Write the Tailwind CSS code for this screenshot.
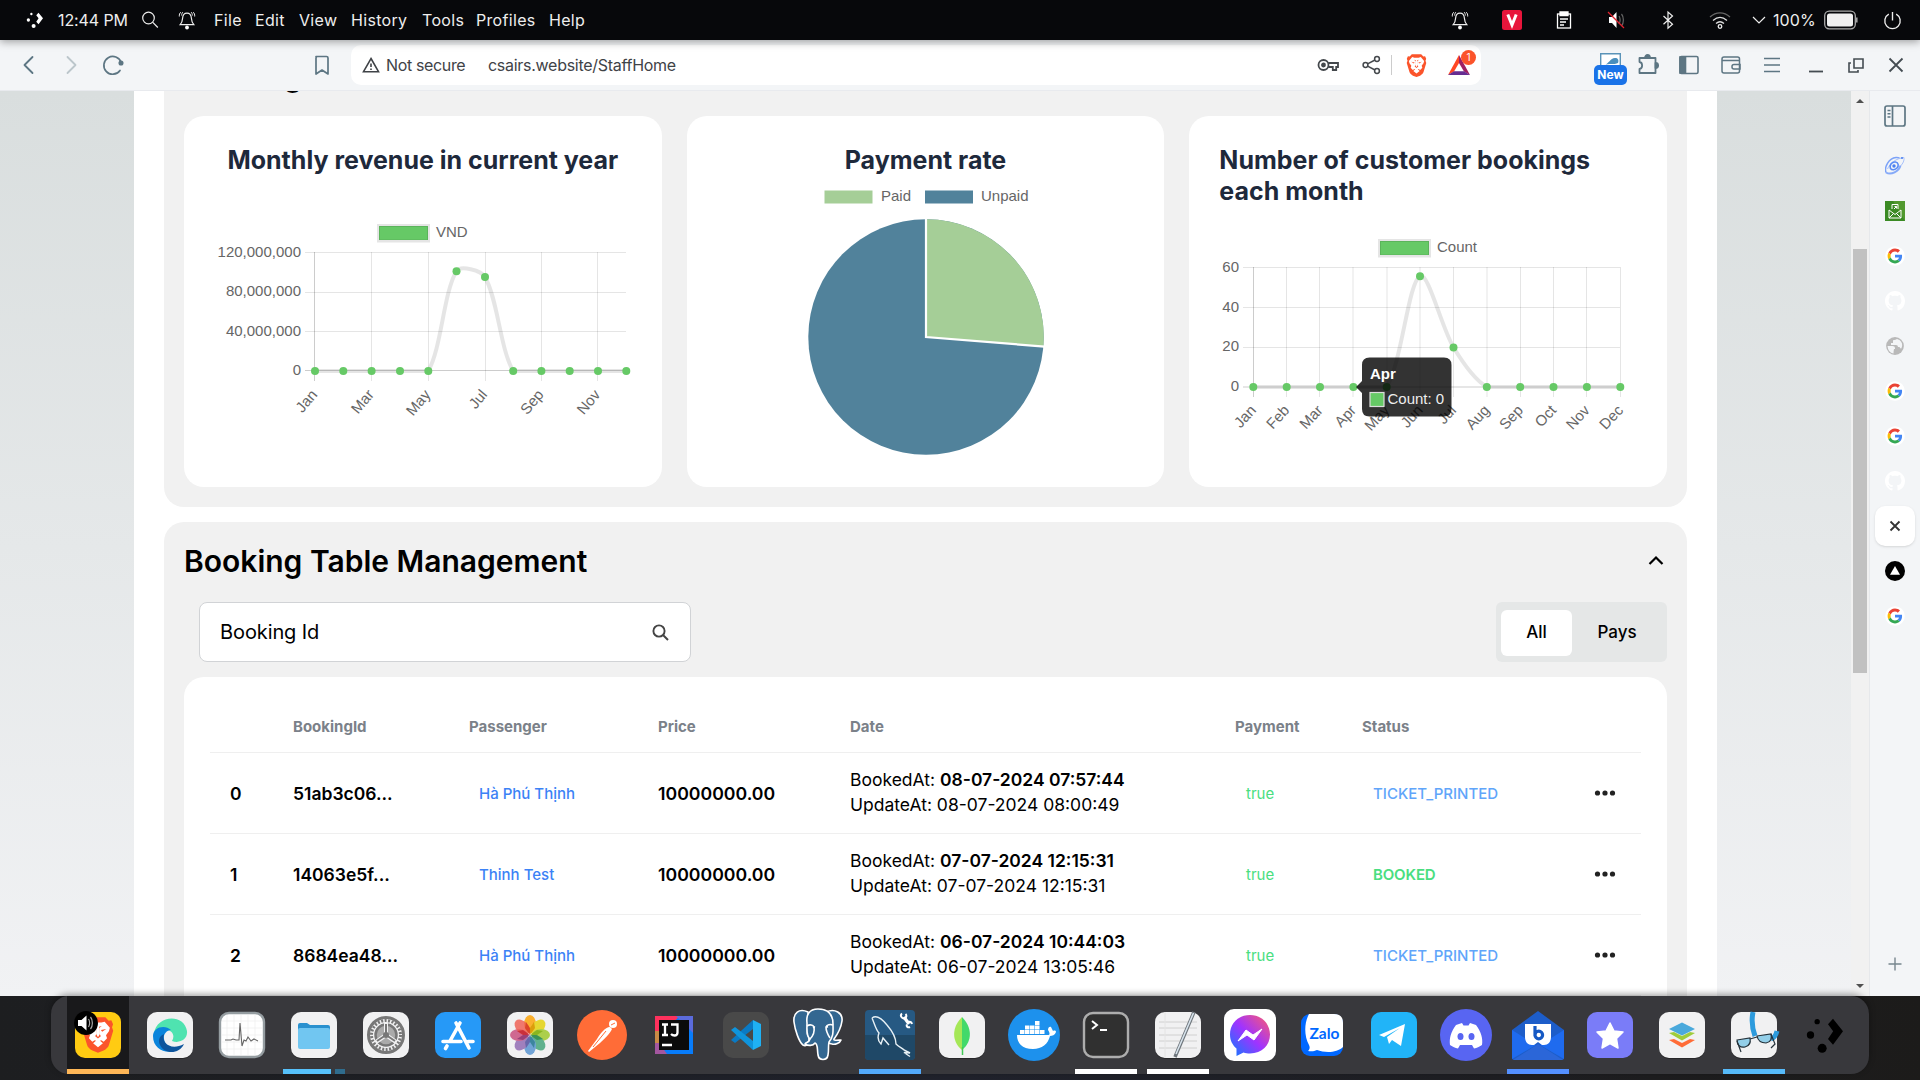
<!DOCTYPE html>
<html lang="en">
<head>
<meta charset="utf-8">
<title>Staff Home</title>
<script src="https://cdn.jsdelivr.net/npm/@tailwindcss/browser@4"></script>
</head>
<body class="w-[1920px] h-[1080px] overflow-hidden flex flex-col bg-[#1f1f23] font-['Inter',sans-serif]">

<svg width="0" height="0" class="absolute">
  <defs>
    <symbol id="bell" viewBox="0 0 20 20"><path d="M10 3.2c-3 0-4.2 2-4.4 5-.2 3-.8 4.6-2.4 6.4h13.600c-1.600-1.800-2.200-3.400-2.400-6.400-.2-3-1.400-5-4.400-5z" fill="none" stroke="#eee" stroke-width="1.200"/><path d="M3.800 2.200C2.600 3.300 2.200 4.500 2.300 6.500M6 2C5 3 4.700 4 4.600 5.500M16.200 2.200c1.200 1.100 1.600 2.300 1.500 4.300M14 2c1 1 1.300 2 1.400 3.500" fill="none" stroke="#eee" stroke-width="1"/><circle cx="10" cy="17.500" r="1.900" fill="#fff"/></symbol>
    <symbol id="google" viewBox="0 0 20 20"><circle cx="10" cy="10" r="9.800" fill="#fff"/><g transform="translate(2.600 2.600) scale(.308)"><path fill="#EA4335" d="M24 9.500c3.540 0 6.710 1.220 9.210 3.600l6.850-6.850C35.900 2.380 30.470 0 24 0 14.620 0 6.510 5.380 2.560 13.220l7.980 6.190C12.430 13.720 17.740 9.500 24 9.500z"/><path fill="#4285F4" d="M46.980 24.550c0-1.570-.150-3.090-.380-4.550H24v9.020h12.940c-.580 2.960-2.260 5.480-4.780 7.180l7.730 6c4.510-4.180 7.090-10.360 7.090-17.650z"/><path fill="#FBBC05" d="M10.530 28.590c-.480-1.450-.760-2.990-.760-4.590s.270-3.140.760-4.590l-7.980-6.190C.920 16.460 0 20.120 0 24c0 3.880.920 7.540 2.560 10.780l7.970-6.190z"/><path fill="#34A853" d="M24 48c6.480 0 11.930-2.130 15.890-5.810l-7.730-6c-2.150 1.450-4.920 2.300-8.160 2.300-6.260 0-11.570-4.220-13.470-9.910l-7.980 6.190C6.510 42.620 14.620 48 24 48z"/></g></symbol>
    <symbol id="github" viewBox="0 0 16 16"><path fill="#fff" d="M8 0C3.580 0 0 3.580 0 8c0 3.540 2.290 6.530 5.470 7.590.400.070.550-.170.550-.380 0-.190-.010-.820-.010-1.490-2.010.370-2.530-.490-2.690-.940-.090-.230-.480-.940-.820-1.130-.280-.150-.680-.520-.010-.530.630-.010 1.080.580 1.230.820.720 1.210 1.870.870 2.330.660.070-.520.280-.870.510-1.070-1.780-.200-3.640-.890-3.640-3.950 0-.870.310-1.590.820-2.150-.080-.200-.360-1.020.080-2.120 0 0 .670-.210 2.200.820.640-.180 1.320-.270 2-.270s1.360.090 2 .270c1.530-1.040 2.200-.820 2.200-.820.440 1.100.160 1.920.080 2.120.510.560.820 1.270.820 2.150 0 3.070-1.870 3.750-3.650 3.950.290.250.540.730.540 1.480 0 1.070-.010 1.930-.010 2.200 0 .210.150.460.550.380A8.010 8.010 0 0 0 16 8c0-4.420-3.580-8-8-8z"/></symbol>
    <symbol id="brave" viewBox="0 0 24 28"><path fill="#fb542b" d="M6.500 1.500h11L20 4l2-.3 1.300 3-.8 2.300.9 2.600-3.200 10.600c-.5 1.800-2 3-4 4.200L12 28l-4.200-1.600c-2-1.200-3.500-2.400-4-4.200L.6 11.600l.9-2.600-.8-2.300L2 3.700 4 4z"/><path fill="#fff" d="M7 4.800l2.500.6h5l2.500-.6 3.900 4.600-.7 2.600-2.200 3 .8 2.200-2.500 2.600-1.900-1.200-.9.500 2.200 1.800-3.700 3-3.700-3 2.200-1.800-.9-.5-1.900 1.200-2.500-2.600.8-2.200-2.200-3-.7-2.600z"/><path fill="#fb542b" d="M5.800 10.200l4 .8-.9 1.300zM18.200 10.200l-4 .8.900 1.300zM9.200 8l2 .5v.7l-.6 4.800 1.400 2.500 1.400-2.500-.6-4.800v-.7l2-.5-1.800 1.500.5 4.800.6 1.400-2.100 1.700-2.100-1.700.6-1.400.5-4.800z"/></symbol>
    <symbol id="tile" viewBox="0 0 56 56"><rect x="5" y="6" width="46" height="46" rx="10" fill="#000" opacity=".3"/><rect x="5" y="5" width="46" height="46" rx="10" fill="#f1f1f2"/></symbol>
    <symbol id="dots" viewBox="0 0 24 24"><g fill="currentColor"><circle cx="8.500" cy="4" r="1.600"/><circle cx="4.500" cy="12" r="2.200"/><circle cx="11.500" cy="20" r="2.700"/><path d="M15 5.500l3-3.300 6 7.600-6 8-3-3.400 3.100-4.600z"/></g></symbol>
    <symbol id="more" viewBox="0 0 24 8"><g fill="#222"><circle cx="4.500" cy="4" r="2.600"/><circle cx="12" cy="4" r="2.600"/><circle cx="19.500" cy="4" r="2.600"/></g></symbol>
  </defs>
</svg>

<!-- System menu bar -->
<header class="h-10 shrink-0 bg-[#07080b] flex items-center text-base text-[#eee] relative z-10 shadow-[0_2px_8px_rgba(0,0,0,.35)] tracking-[.32px]">
  <svg class="w-[18px] h-[18px] ml-[25px] text-white shrink-0"><use href="#dots"/></svg>
  <div class="ml-[15px] w-[83px] whitespace-nowrap tracking-[-.1px]">12:44 PM</div>
  <svg class="w-[18px] h-[18px] shrink-0" viewBox="0 0 18 18" fill="none" stroke="#eee" stroke-width="1.200"><circle cx="7.500" cy="7" r="5.800"/><path d="M11.800 11.300l5 5.200"/></svg>
  <svg class="w-5 h-5 ml-[18px] shrink-0"><use href="#bell"/></svg>
  <nav class="flex ml-[17px] whitespace-nowrap">
    <div class="w-[41px]">File</div><div class="w-[44px]">Edit</div><div class="w-[52px]">View</div><div class="w-[71px]">History</div><div class="w-[54px]">Tools</div><div class="w-[73px]">Profiles</div><div>Help</div>
  </nav>
  <div class="ml-auto mr-[18px] flex items-center">
    <svg class="w-5 h-5 mr-[32px]"><use href="#bell"/></svg>
    <svg class="w-5 h-5 mr-[32px]" viewBox="0 0 20 20"><rect width="20" height="20" rx="2.500" fill="#e8153b"/><path d="M5.800 4.500L10 15l4.200-10.500" fill="none" stroke="#fff" stroke-width="3"/></svg>
    <svg class="w-5 h-5 mr-[32px]" viewBox="0 0 20 20" fill="none" stroke="#fff" stroke-width="1.300"><rect x="3.500" y="4" width="13" height="14"/><path d="M6 2h8v3.500H6z" fill="#fff"/><path d="M6 9h8M6 12h6M6 15h4"/></svg>
    <svg class="w-5 h-5 mr-[32px]" viewBox="0 0 20 20"><path d="M3 7h3l4.500-5v16L6 13H3z" fill="#fff"/><path d="M13 6c1.500 2 1.500 6 0 8M15.500 4c2.500 3 2.500 9 0 12" fill="none" stroke="#666" stroke-width="1.200"/><path d="M2 2l16 16" stroke="#e0202c" stroke-width="1.300"/></svg>
    <svg class="w-5 h-5 mr-[31px]" viewBox="0 0 20 20" fill="none" stroke="#eee" stroke-width="1.200"><path d="M5.500 6l9 8.200-4.500 4V2l4.500 4-9 8.200"/></svg>
    <svg class="w-[22px] h-5 mr-[21px]" viewBox="0 0 22 20" fill="none" stroke-width="1.300"><path d="M1 7c6-5.500 14-5.500 20 0" stroke="#666"/><path d="M4 10.500c4.500-4 9.500-4 14 0M7 13.500c2.500-2.200 5.500-2.200 8 0" stroke="#ddd"/><circle cx="11" cy="16.500" r="1.800" stroke="#eee"/></svg>
    <svg class="w-[14px] h-3 mr-[7px]" viewBox="0 0 14 12" fill="none" stroke="#eee" stroke-width="1.200"><path d="M1 3l6 6 6-6"/></svg>
    <div class="w-[51px] tracking-[.1px]">100%</div>
    <svg class="w-[34px] h-5 mr-[25px]" viewBox="0 0 34 20"><rect x=".7" y="1.200" width="30.600" height="17.600" rx="4.500" fill="none" stroke="#aaa" stroke-width="1.300"/><rect x="3" y="3.500" width="26" height="13" rx="2.500" fill="#f1f1f1"/><path d="M32.800 7.500v5" stroke="#aaa" stroke-width="1.500"/></svg>
    <svg class="w-[19px] h-[19px]" viewBox="0 0 18 18" fill="none" stroke="#eee" stroke-width="1.300"><path d="M5.500 3a7.300 7.300 0 1 0 7 0M9 1v8"/></svg>
  </div>
</header>

<!-- Browser toolbar -->
<div class="h-[51px] shrink-0 bg-[#f3f5f7] border-b border-[#e8eaee] flex items-center text-[#5d7683]">
  <svg class="w-6 h-6 ml-[17px]" viewBox="0 0 24 24" fill="none" stroke="#5d7683" stroke-width="1.800" stroke-linecap="round" stroke-linejoin="round"><path d="M15.500 4l-8 8 8 8"/></svg>
  <svg class="w-6 h-6 ml-[18px]" viewBox="0 0 24 24" fill="none" stroke="#bcc6cb" stroke-width="1.800" stroke-linecap="round" stroke-linejoin="round"><path d="M8.500 4l8 8-8 8"/></svg>
  <svg class="w-6 h-6 ml-[18px]" viewBox="0 0 24 24" fill="none" stroke="#5d7683" stroke-width="1.700" stroke-linecap="round"><path d="M19 17.500a8.900 8.900 0 1 1 1.200-8"/><circle cx="20" cy="10" r="1.700" fill="#5d7683"/></svg>
  <svg class="w-6 h-6 ml-[185px]" viewBox="0 0 24 24" fill="none" stroke="#5d7683" stroke-width="1.700" stroke-linejoin="round"><path d="M6 3.500h10.500q1.500 0 1.500 1.500v16l-6-4-6 4V5q0-1.500 1.500-1.500z"/></svg>
  <div class="ml-[17px] w-[1130px] h-10 rounded-[10px] bg-white flex items-center text-base text-[#3f4347]">
    <svg class="w-[18px] h-[18px] ml-[11px]" viewBox="0 0 18 18" fill="none" stroke="#3f4347" stroke-width="1.600"><path d="M9 2.500l7.500 13.200H1.500zM9 7.500v3.600M9 12.500v1.500"/></svg>
    <span class="ml-[6px] w-[102px] whitespace-nowrap tracking-[-.35px]">Not secure</span>
    <span class="whitespace-nowrap tracking-[-.28px]">csairs.website/StaffHome</span>
    <svg class="w-[22px] h-5 ml-auto" viewBox="0 0 22 20" fill="none" stroke="#44484c" stroke-width="1.800"><circle cx="6.500" cy="10" r="5"/><circle cx="6.500" cy="10" r="1.500" fill="#44484c"/><path d="M11.200 8H21v4h-1.800v3h-3.400v-3h-4.600"/></svg>
    <svg class="w-5 h-5 ml-[22px]" viewBox="0 0 20 20" fill="none" stroke="#44484c" stroke-width="1.500"><circle cx="4.500" cy="10" r="2.400"/><circle cx="16" cy="4" r="2.400"/><circle cx="16" cy="16" r="2.400"/><path d="M6.600 8.900L14 5M6.600 11.100L14 15"/></svg>
    <div class="w-px h-5 bg-[#ccc] ml-[10px]"></div>
    <svg class="w-[21px] h-6 ml-[14px]"><use href="#brave"/></svg>
    <div class="relative w-[24px] h-6 ml-[20px] mr-[10px]">
      <svg class="w-6 h-6" viewBox="0 0 24 24"><path d="M12 2L1 22l6-3.500L12 10z" fill="#ff4724"/><path d="M12 2l11 20-6-3.500L12 10z" fill="#9e1f63"/><path d="M1 22h22l-6-3.800H7z" fill="#662d91"/></svg>
      <div class="absolute left-[14px] -top-[3px] size-[15px] rounded-full bg-[#fb542b] text-white text-[10px] leading-[15px] text-center">1</div>
    </div>
  </div>
  <div class="relative w-[33px] h-[38px] ml-[113px] shrink-0">
    <svg class="absolute left-[6px] top-[7px] w-[21px] h-[14px]" viewBox="0 0 21 14"><path d="M.7 14V.7h19.600V14" fill="#fff" stroke="#5a93b8" stroke-width="1.400"/><path d="M4 12c5-1 6-7 11-7 3 0 4 2 3 5-4 2-9 0-14 2z" fill="#4a8fbd"/></svg>
    <div class="absolute left-0 top-[19px] w-[33px] h-[20px] rounded-[5px] bg-[#1a73e8] text-white text-[12px] leading-[19px] font-bold text-center">New</div>
  </div>
  <svg class="w-6 h-6 ml-[10px]" viewBox="0 0 24 24" fill="none" stroke="#5d7683" stroke-width="1.800" stroke-linejoin="round"><path d="M2.500 5h16v15h-16v-4c3.500-.5 3.500-6.500 0-7z"/><path d="M8 5c0-4 5-4 5 0zM18.500 10c3.500 0 3.500 5 0 5z" fill="#5d7683"/></svg>
  <svg class="w-6 h-6 ml-[16px]" viewBox="0 0 24 24" fill="none" stroke="#5d7683" stroke-width="1.600"><rect x="3" y="3.500" width="18" height="17" rx="1.500"/><path d="M3 4h5.500v16H3z" fill="#5d7683"/></svg>
  <svg class="w-6 h-6 ml-[18px]" viewBox="0 0 24 24" fill="none" stroke="#5d7683" stroke-width="1.500"><rect x="3" y="4" width="17.500" height="16" rx="2"/><path d="M3 7.500h17.500M21 11.500h-6q-2 0-2 2v.5q0 2 2 2h6z"/></svg>
  <svg class="w-6 h-6 ml-[17px]" viewBox="0 0 24 24" stroke="#5d7683" stroke-width="1.500"><path d="M4 5.500h16M4 12h16M4 18.500h16"/></svg>
  <svg class="w-6 h-6 ml-[20px]" viewBox="0 0 24 24" stroke="#444c52" stroke-width="1.800"><path d="M5 18.500h14"/></svg>
  <svg class="w-6 h-6 ml-[16px]" viewBox="0 0 24 24" fill="none" stroke="#444c52" stroke-width="1.600"><path d="M10 6h9v9h-9z"/><path d="M7 10H5v9h9v-2"/></svg>
  <svg class="w-6 h-6 ml-[16px]" viewBox="0 0 24 24" stroke="#444c52" stroke-width="1.800"><path d="M5.500 5.500l13 13M18.500 5.500l-13 13"/></svg>
</div>

<div class="h-[905px] shrink-0 flex overflow-hidden">
  <!-- Page -->
  <main class="w-[1851px] h-full px-[134px] bg-linear-to-b from-[#d9dede] to-[#f1f2f4] overflow-hidden">
    <div class="w-[1583px] h-full bg-white px-[30px] overflow-hidden">
      <section class="-mt-[56px] h-[472px] rounded-[20px] bg-[#f1f1f1] px-5">
        <h2 class="h-[81px] flex items-center text-[30px] font-semibold">Booking</h2>
        <div class="grid grid-cols-3 gap-[25px]">
          <div class="h-[371px] rounded-[20px] bg-white pt-[29px] overflow-hidden">
            <h3 class="text-center text-[25px] leading-[31px] font-bold text-[#1e293b]">Monthly revenue in current year</h3>
            <svg class="w-[478px] h-[311px] font-['Liberation_Sans',Arial,sans-serif] text-[15px] fill-[#666]" viewBox="184 176 478 311">
              <rect x="379" y="226" width="49" height="14" fill="#66c966"/><rect x="378.500" y="225.500" width="50" height="15.500" fill="none" stroke="#000" stroke-opacity=".1" stroke-width="3"/>
              <text x="436" y="237">VND</text>
              <g text-anchor="end"><text x="301" y="257">120,000,000</text><text x="301" y="296">80,000,000</text><text x="301" y="336">40,000,000</text><text x="301" y="375">0</text></g>
              <g stroke="#000" stroke-opacity=".1" fill="none"><path d="M305 252.500H626M305 292.500H626M305 331.500H626M371.500 252V381M428.500 252V381M485.500 252V381M541.500 252V381M597.500 252V381"/><path d="M305 370.500H626M314.500 252V381" stroke-opacity=".2"/></g>
              <path d="M315 371H428.300C441.700 347.400 443.400 293 456.500 271C460.300 265 481.200 270.200 485 277C498 300 500.100 349 513.200 371H626.300" fill="none" stroke="#000" stroke-opacity=".1" stroke-width="4"/>
              <g fill="#66c966"><circle cx="315" cy="371" r="4"/><circle cx="343.300" cy="371" r="4"/><circle cx="371.600" cy="371" r="4"/><circle cx="400" cy="371" r="4"/><circle cx="428.300" cy="371" r="4"/><circle cx="456.500" cy="271.300" r="4"/><circle cx="485" cy="277" r="4"/><circle cx="513.200" cy="371" r="4"/><circle cx="541.400" cy="371" r="4"/><circle cx="569.700" cy="371" r="4"/><circle cx="598" cy="371" r="4"/><circle cx="626.300" cy="371" r="4"/></g>
              <g text-anchor="end"><text transform="translate(318 395) rotate(-50)">Jan</text><text transform="translate(374.600 395) rotate(-50)">Mar</text><text transform="translate(431.300 395) rotate(-50)">May</text><text transform="translate(488 395) rotate(-50)">Jul</text><text transform="translate(544.400 395) rotate(-50)">Sep</text><text transform="translate(601 395) rotate(-50)">Nov</text></g>
            </svg>
          </div>
          <div class="h-[371px] rounded-[20px] bg-white pt-[29px] overflow-hidden">
            <h3 class="text-center text-[25px] leading-[31px] font-bold text-[#1e293b]">Payment rate</h3>
            <svg class="w-[478px] h-[311px] font-['Liberation_Sans',Arial,sans-serif] text-[15px] fill-[#666]" viewBox="687 176 478 311">
              <rect x="824.500" y="190.500" width="48" height="13" fill="#a5ce97"/><text x="881" y="201">Paid</text>
              <rect x="925" y="190.500" width="48" height="13" fill="#51829b"/><text x="981" y="201">Unpaid</text>
              <circle cx="926" cy="337" r="117.700" fill="#51829b"/>
              <path d="M926 337V219.300A117.700 117.700 0 0 1 1043.400 346.500z" fill="#a5ce97"/>
              <path d="M926 218V337L1044.500 346.600" fill="none" stroke="#fff" stroke-width="2.200"/>
            </svg>
          </div>
          <div class="h-[371px] rounded-[20px] bg-white pt-[29px] overflow-hidden">
            <h3 class="px-[30px] text-[25px] leading-[31px] font-bold text-[#1e293b]">Number of customer bookings<br>each month</h3>
            <svg class="w-[478px] h-[280px] font-['Liberation_Sans',Arial,sans-serif] text-[15px] fill-[#666]" viewBox="1189 207 478 280">
              <rect x="1380" y="241" width="49" height="14" fill="#66c966"/><rect x="1379.500" y="240.500" width="50" height="15.500" fill="none" stroke="#000" stroke-opacity=".1" stroke-width="3"/>
              <text x="1437" y="252">Count</text>
              <g text-anchor="end"><text x="1239" y="272">60</text><text x="1239" y="312">40</text><text x="1239" y="351">20</text><text x="1239" y="391">0</text></g>
              <g stroke="#000" stroke-opacity=".1" fill="none"><path d="M1243 267.500H1620M1243 307.500H1620M1243 347.500H1620M1286.500 267V397M1319.500 267V397M1353 267V397M1387 267V397M1420 267V397M1453.500 267V397M1487 267V397M1520.500 267V397M1553.500 267V397M1586.500 267V397M1620.500 267V397"/><path d="M1243 387H1620M1253.500 267V397" stroke-opacity=".2"/></g>
              <path d="M1253.300 387H1386.700C1402.200 361.100 1408.100 283.100 1420 276C1428.100 271.200 1441.400 327.200 1453.500 347.300C1461.400 360.500 1474.600 379.700 1486.800 387H1620.300" fill="none" stroke="#000" stroke-opacity=".1" stroke-width="4"/>
              <g fill="#66c966"><circle cx="1253.300" cy="387" r="4"/><circle cx="1286.700" cy="387" r="4"/><circle cx="1320" cy="387" r="4"/><circle cx="1353.400" cy="387" r="4"/><circle cx="1386.700" cy="387" r="4"/><circle cx="1420" cy="276.300" r="4"/><circle cx="1453.500" cy="347.500" r="4"/><circle cx="1486.800" cy="387" r="4"/><circle cx="1520.200" cy="387" r="4"/><circle cx="1553.500" cy="387" r="4"/><circle cx="1586.900" cy="387" r="4"/><circle cx="1620.300" cy="387" r="4"/></g>
              <g text-anchor="end"><text transform="translate(1257 411) rotate(-47)">Jan</text><text transform="translate(1290.300 411) rotate(-47)">Feb</text><text transform="translate(1323.700 411) rotate(-47)">Mar</text><text transform="translate(1357 411) rotate(-47)">Apr</text><text transform="translate(1390.400 411) rotate(-47)">May</text><text transform="translate(1423.700 411) rotate(-47)">Jun</text><text transform="translate(1457 411) rotate(-47)">Jul</text><text transform="translate(1490.500 411) rotate(-47)">Aug</text><text transform="translate(1523.900 411) rotate(-47)">Sep</text><text transform="translate(1557.200 411) rotate(-47)">Oct</text><text transform="translate(1590.600 411) rotate(-47)">Nov</text><text transform="translate(1624 411) rotate(-47)">Dec</text></g>
              <path d="M1369.500 357.500h74.500q7.500 0 7.500 7.500v44q0 7.500-7.500 7.500h-74.500q-7.500 0-7.500-7.500v-16l-6-6 6-6v-16q0-7.500 7.500-7.500z" fill="#000" fill-opacity=".8"/>
              <text x="1370" y="379" fill="#fff" font-weight="bold">Apr</text>
              <rect x="1370" y="392.500" width="14" height="14" fill="#66c966" stroke="#ddd" stroke-width="1.200"/>
              <text x="1387.500" y="404" fill="#eee">Count: 0</text>
            </svg>
          </div>
        </div>
      </section>

      <section class="mt-[15px] h-[520px] rounded-t-[20px] bg-[#f1f1f1] px-5">
        <div class="h-20 flex items-center justify-between pb-[2px]">
          <h2 class="text-[30px] font-semibold">Booking Table Management</h2>
          <svg class="w-4 h-4 mr-[3px]" viewBox="0 0 16 16" fill="none" stroke="#000" stroke-width="2.200"><path d="M1.500 11L8 4.500l6.500 6.500"/></svg>
        </div>
        <div class="flex justify-between pl-[15px]">
          <div class="w-[492px] h-[60px] rounded-lg border border-[#d1d3d6] bg-white flex items-center justify-between pl-5 pr-[21px] text-xl">
            <span class="tracking-[-.1px]">Booking Id</span>
            <svg class="w-[17px] h-[17px]" viewBox="0 0 17 17" fill="none" stroke="#444" stroke-width="1.900"><circle cx="7" cy="7" r="5.600"/><path d="M11 11l5 5"/></svg>
          </div>
          <div class="w-[171px] h-[60px] rounded-md bg-[#e5e7e7] pl-[5px] pr-[6px] pt-[1px] flex items-center text-[17px] font-medium">
            <div class="w-[71px] h-[46px] rounded-md bg-white flex items-center justify-center">All</div>
            <div class="flex-1 text-center pl-[1px]">Pays</div>
          </div>
        </div>
        <div class="mt-[15px] h-[365px] rounded-t-[20px] bg-white px-[26px] pt-[25px]">
          <div class="grid grid-cols-[83px_176px_189px_192px_385px_127px_1fr] h-[51px] items-center text-[15px] font-bold text-[#7b8189] border-b border-[#efefef]">
            <div></div><div>BookingId</div><div>Passenger</div><div>Price</div><div>Date</div><div>Payment</div><div>Status</div>
          </div>
          <div class="grid grid-cols-[83px_176px_189px_192px_385px_127px_1fr_48px] h-[81px] items-center text-[17.5px] leading-[25px] border-b border-[#efefef]">
            <div class="pl-5 font-semibold">0</div><div class="font-semibold">51ab3c06...</div><div class="pl-[10px] text-[15px] font-medium text-[#3b82f6]">Hà Phú Thịnh</div><div class="text-[17.700px] font-semibold">10000000.00</div>
            <div class="pb-[2px]">BookedAt: <b class="font-semibold">08-07-2024 07:57:44</b><br>UpdateAt: 08-07-2024 08:00:49</div>
            <div class="pl-[11px] text-[15px] text-[#4ade80]">true</div><div class="pl-[11px] text-[15px] font-medium text-[#60a5fa]">TICKET_PRINTED</div><svg class="w-6 h-2"><use href="#more"/></svg>
          </div>
          <div class="grid grid-cols-[83px_176px_189px_192px_385px_127px_1fr_48px] h-[81px] items-center text-[17.5px] leading-[25px] border-b border-[#efefef]">
            <div class="pl-5 font-semibold">1</div><div class="font-semibold">14063e5f...</div><div class="pl-[10px] text-[15px] font-medium text-[#3b82f6]">Thinh Test</div><div class="text-[17.700px] font-semibold">10000000.00</div>
            <div class="pb-[2px]">BookedAt: <b class="font-semibold">07-07-2024 12:15:31</b><br>UpdateAt: 07-07-2024 12:15:31</div>
            <div class="pl-[11px] text-[15px] text-[#4ade80]">true</div><div class="pl-[11px] text-[15px] font-semibold tracking-[-.15px] text-[#4ade80]">BOOKED</div><svg class="w-6 h-2"><use href="#more"/></svg>
          </div>
          <div class="grid grid-cols-[83px_176px_189px_192px_385px_127px_1fr_48px] h-[81px] items-center text-[17.5px] leading-[25px] border-b border-[#efefef]">
            <div class="pl-5 font-semibold">2</div><div class="font-semibold">8684ea48...</div><div class="pl-[10px] text-[15px] font-medium text-[#3b82f6]">Hà Phú Thịnh</div><div class="text-[17.700px] font-semibold">10000000.00</div>
            <div class="pb-[2px]">BookedAt: <b class="font-semibold">06-07-2024 10:44:03</b><br>UpdateAt: 06-07-2024 13:05:46</div>
            <div class="pl-[11px] text-[15px] text-[#4ade80]">true</div><div class="pl-[11px] text-[15px] font-medium text-[#60a5fa]">TICKET_PRINTED</div><svg class="w-6 h-2"><use href="#more"/></svg>
          </div>
        </div>
      </section>
    </div>
  </main>

  <!-- Scrollbar -->
  <div class="w-[18px] bg-[#f1f1f1] flex flex-col items-center pt-[7px] pb-[8px]">
    <div class="border-x-[4px] border-x-transparent border-b-[4px] border-b-[#505050] h-1 mt-[1px]"></div>
    <div class="w-[14px] h-[424px] bg-[#c1c1c1] mt-[146px]"></div>
    <div class="border-x-[4px] border-x-transparent border-t-[4px] border-t-[#505050] h-1 mt-auto"></div>
  </div>

  <!-- Side bar -->
  <aside class="w-[51px] bg-[#f3f5f7] border-l border-[#e6e8eb] flex flex-col items-center pt-[3px]">
    <div class="h-[49px] flex items-center pb-[5px]"><svg class="w-[22px] h-[22px]" viewBox="0 0 22 22" fill="none" stroke="#5d7683" stroke-width="1.700"><rect x="1" y="1" width="20" height="20" rx="2"/><path d="M8.500 1v20"/><path d="M3.500 5.500h3M3.500 8.700h3M3.500 12h3" stroke-width="1.500"/></svg></div>
    <div class="h-[45px] flex items-center pb-[1px]"><svg class="w-5 h-5" viewBox="0 0 20 20" fill="none"><path d="M1 17.500C-1 12 4 3 11 2.500c2-.1 3 .3 4 1" stroke="#7ba2f8" stroke-width="1.500"/><path d="M1 17.500c5 3 13-1 14.500-7" stroke="#86aaf8" stroke-width="2"/><path d="M2.500 14C5 8 11 3.500 19 2.500c.5 3-1 6-3.500 8.500" stroke="#a9c2fa" stroke-width="1"/><path d="M5.500 13.500C4 10 7 6.500 10.500 7c3 .5 3.500 4 1.500 6s-5 2.500-6.500.5z" stroke="#5b8cf5" stroke-width="1.600"/><circle cx="9" cy="11" r="1.700" fill="#4a7ff0"/><circle cx="17" cy="3" r="1" fill="#4a7ff0"/></svg></div>
    <div class="h-[45px] flex items-center"><svg class="w-5 h-5" viewBox="0 0 20 20"><rect width="20" height="20" fill="#3a8a24"/><path d="M20 0v20L8 0z" fill="#60a337" opacity=".6"/><path d="M7 8V3.500h6V8M4 9l6 4.500L16 9v8H4zM4 17l4.500-4.500M16 17l-4.500-4.500M9 8l2.500-2.500M9.500 5.500h2v2" fill="none" stroke="#fff"/></svg></div>
    <div class="h-[45px] flex items-center"><svg class="w-5 h-5"><use href="#google"/></svg></div>
    <div class="h-[45px] flex items-center"><svg class="w-5 h-5"><use href="#github"/></svg></div>
    <div class="h-[45px] flex items-center"><svg class="w-5 h-5" viewBox="0 0 20 20"><circle cx="10" cy="10" r="8.900" fill="#b9b9b9"/><path d="M2.500 10h5q2.500 0 2.500 2v1h-1q-.5 2-.5 4.500Q3 16.500 2.500 10zM12 3q-1 1-4 1.200V7H6v2h5q2 0 2 2h1.500q1.500 2.500 2 1Q18.500 7 14.500 4z" fill="#f3f5f7"/></svg></div>
    <div class="h-[45px] flex items-center"><svg class="w-5 h-5"><use href="#google"/></svg></div>
    <div class="h-[45px] flex items-center"><svg class="w-5 h-5"><use href="#google"/></svg></div>
    <div class="h-[45px] flex items-center"><svg class="w-5 h-5"><use href="#github"/></svg></div>
    <div class="h-[45px] flex items-center"><div class="size-10 rounded-[10px] bg-white shadow-sm flex items-center justify-center"><svg class="w-3 h-3" viewBox="0 0 12 12" stroke="#333" stroke-width="1.800"><path d="M1.500 1.500l9 9M10.500 1.500l-9 9"/></svg></div></div>
    <div class="h-[45px] flex items-center"><svg class="w-5 h-5" viewBox="0 0 20 20"><circle cx="10" cy="10" r="10" fill="#000"/><path d="M10 5l5 8.700H5z" fill="#fff"/></svg></div>
    <div class="h-[45px] flex items-center"><svg class="w-5 h-5"><use href="#google"/></svg></div>
    <svg class="w-4 h-4 mt-auto mb-[24px]" viewBox="0 0 16 16" stroke="#77868e" stroke-width="1.400"><path d="M8 1.500v13M1.500 8h13"/></svg>
  </aside>
</div>

<!-- Dock -->
<footer class="h-[84px] shrink-0 bg-linear-to-r from-[#1d1e20] via-[#20222c] to-[#1c1b1a] px-[51px] relative z-10">
  <div class="h-[78px] rounded-[18px] bg-[#38383c] shadow-[0_-2px_6px_rgba(0,0,0,.35)] flex gap-[10px] pl-4">
    <div class="w-[62px] bg-[#19191b] border-b-[5px] border-[#ffb757] flex flex-col items-center pt-[11px] shrink-0">
      <svg class="w-14 h-14 shrink-0" viewBox="0 0 56 56"><rect x="5" y="5" width="46" height="46" rx="10" fill="#ffcb12"/><svg x="12" y="7" width="32" height="40"><use href="#brave"/></svg><circle cx="16" cy="16" r="12" fill="#000"/><path d="M8 13h3.500l5-4.500v15l-5-4.500H8z" fill="#fff"/><path d="M18.500 12c1.500 2 1.500 6 0 8M20.500 10c2.500 3 2.500 9 0 12" fill="none" stroke="#aaa" stroke-width="1.200"/></svg>
    </div>
    <div class="w-[62px] flex justify-center pt-[11px] shrink-0"><svg class="w-14 h-14" viewBox="0 0 56 56"><use href="#tile"/><path d="M12 27C14 8 42 6 45 24c1 8-7 13-15 10 3-5 1-10-5-11-6 0-10 0-13 4z" fill="#4fe3b0"/><path d="M11 29c0-9 12-12 18-6-4 0-8 4-7 9 1 7 8 12 14 10-9 6-25 2-25-13z" fill="#0a84dc"/><path d="M22 27c-3 9 7 17 20 10-5 11-20 10-24 1-2-4-1-9 4-11z" fill="#0d549c"/></svg></div>
    <div class="w-[62px] flex justify-center pt-[11px] shrink-0"><svg class="w-14 h-14" viewBox="0 0 56 56"><rect x="6" y="6" width="44" height="44" rx="9" fill="#fff" stroke="#959da1" stroke-width="2.400"/><path d="M13 8v40M20 8v40M27 8v40M34 8v40M41 8v40M8 14h40M8 21h40M8 28h40M8 35h40M8 42h40" stroke="#eee" stroke-width=".7"/><path d="M11 33h6l2-1 3 1h3l1-17L28 39l2-6 2 1 2-4 3 4 3-2 4 2" fill="none" stroke="#666" stroke-width="1.100"/></svg></div>
    <div class="w-[62px] flex flex-col items-center pt-[11px] shrink-0"><svg class="w-14 h-14 shrink-0" viewBox="0 0 56 56"><use href="#tile"/><path d="M12 18q0-2 2-2h7l3 2h18q2 0 2 2v8H12z" fill="#2a91cf"/><rect x="12" y="21" width="32" height="21" rx="2" fill="#71c6f1"/></svg><div class="mt-[6px] flex w-full gap-1 pl-0"><div class="w-12 h-[5px] bg-[#56c1fb]"></div><div class="w-[10px] h-[5px] bg-[#2f6c8d]"></div></div></div>
    <div class="w-[62px] flex justify-center pt-[11px] shrink-0"><svg class="w-14 h-14" viewBox="0 0 56 56" fill="none"><use href="#tile"/><circle cx="28" cy="28" r="17.500" stroke="#777" stroke-width="3"/><circle cx="28" cy="28" r="14.500" stroke="#777" stroke-width="3" stroke-dasharray="2 1.500"/><circle cx="28" cy="28" r="10.500" fill="#aaa" stroke="#777" stroke-width="2.500"/><path d="M28 28V16M28 28l-10 7M28 28l10 7" stroke="#f1f1f2" stroke-width="4"/><path d="M28 28V17M28 28l-9 6M28 28l9 6" stroke="#777" stroke-width="2"/><circle cx="28" cy="28" r="3" fill="#777"/></svg></div>
    <div class="w-[62px] flex justify-center pt-[11px] shrink-0"><svg class="w-14 h-14" viewBox="0 0 56 56"><rect x="5" y="5" width="46" height="46" rx="10" fill="#2699f7"/><path d="M26 16l13 25M30 16L20 34M13 34.500h18M38 34.500h5M17 39l-1.500 2.500" stroke="#fff" stroke-width="3.600" stroke-linecap="round"/></svg></div>
    <div class="w-[62px] flex justify-center pt-[11px] shrink-0"><svg class="w-14 h-14" viewBox="0 0 56 56"><use href="#tile"/><g opacity=".9"><ellipse cx="28" cy="17" rx="6" ry="9" fill="#fba919"/><ellipse cx="28" cy="17" rx="6" ry="9" fill="#e5d51d" transform="rotate(45 28 28)"/><ellipse cx="28" cy="17" rx="6" ry="9" fill="#a5cc3a" transform="rotate(90 28 28)"/><ellipse cx="28" cy="17" rx="6" ry="9" fill="#51ab84" transform="rotate(135 28 28)"/><ellipse cx="28" cy="17" rx="6" ry="9" fill="#649bd3" transform="rotate(180 28 28)"/><ellipse cx="28" cy="17" rx="6" ry="9" fill="#9874b8" transform="rotate(225 28 28)"/><ellipse cx="28" cy="17" rx="6" ry="9" fill="#cc5a87" transform="rotate(270 28 28)"/><ellipse cx="28" cy="17" rx="6" ry="9" fill="#ee5546" fill-opacity=".85" transform="rotate(315 28 28)"/></g><g opacity=".75"><path d="M28 28l-5-7 1-6 4 6z" fill="#d6371c"/><path d="M28 28l5-7-1-6-4 6z" fill="#d98a00"/><path d="M28 28l7-5 6 1-6 4z" fill="#7fae12"/><path d="M28 28l7 5 6-1-6-4z" fill="#2e8a45"/><path d="M28 28l5 7-1 6-4-6z" fill="#2b7c8c"/><path d="M28 28l-5 7 1 6 4-6z" fill="#5560a5"/><path d="M28 28l-7 5-6-1 6-4z" fill="#87336f"/><path d="M28 28l-7-5-6 1 6 4z" fill="#c01f2f"/></g></svg></div>
    <div class="w-[62px] flex justify-center pt-[11px] shrink-0"><svg class="w-14 h-14" viewBox="0 0 56 56"><circle cx="28" cy="28" r="25" fill="#ff6c37"/><circle cx="39" cy="17" r="4" fill="#fff"/><path d="M36 20c-5 0-10 7-13 12l-9 12 1 1 11-9c5-5 10-9 12-14z" fill="#fff"/><path d="M19 40l13-16M37 18l4-2" stroke="#ff6c37" stroke-width="1"/></svg></div>
    <div class="w-[62px] flex justify-center pt-[11px] shrink-0"><svg class="w-14 h-14" viewBox="0 0 56 56"><path d="M9 9h38v38H9z" fill="#087cfa"/><path d="M9 9h25L9 32z" fill="#fe315d"/><path d="M9 30l12 17H9z" fill="#a3569f"/><path d="M9 24h6v12H9z" fill="#c98a45"/><path d="M30 9h17v17z" fill="#5b6bdc"/><path d="M13 13h30v30H13z" fill="#0b0b0b"/><g fill="none" stroke="#fff" stroke-width="2.300"><path d="M16 17.500h6M19 17.500v10M16 28h6M25 17.500h6.500v8q0 3-3 3-2 0-3.500-1.500M16 38h10"/></g></svg></div>
    <div class="w-[62px] flex justify-center pt-[11px] shrink-0"><svg class="w-14 h-14" viewBox="0 0 56 56"><rect x="5" y="5" width="46" height="46" rx="10" fill="#494949"/><path d="M35 13l8 4v22l-8 4z" fill="#1fb1f4"/><path d="M35 13v9L17 36l-4-3z" fill="#0a7ac4"/><path d="M35 43v-9L17 20l-4 3z" fill="#0f94dc"/></svg></div>
    <div class="w-[62px] flex justify-center pt-[11px] shrink-0"><svg class="w-14 h-14" viewBox="0 0 56 56" fill="#336791" stroke="#fff" stroke-width="1.600" stroke-linejoin="round"><path d="M18 5C9 1 3 6 4 15c1 8 5 20 9 23 3 2 5-1 6-4z"/><path d="M36 5c9-4 17 1 16 9-1 7-5 14-8 18-1 2 5 1 7 1-1 3-6 5-9 4-3 0-5-2-5-6z"/><path d="M28 2c-9 0-12 6-11 14 0 7-1 13 3 16-1 4-4 3-5 5 3 2 8 2 10-1 3 1 2 5 3 12 1 6 9 6 10 0 1-5 0-9 1-13 5-6 4-11 4-18C43 7 38 2 28 2z"/><path d="M17 19c3-2 6-1 7 1 1 6-1 9-4 12M43 18c-3-1-6 0-7 2 0 5 2 8 4 11" fill="none"/><path d="M23 20l2 .5M36 20l2-.5" stroke-width="2"/></svg></div>
    <div class="w-[62px] border-b-[5px] border-[#52a9fb] flex justify-center pt-[11px] shrink-0"><svg class="w-14 h-14 shrink-0" viewBox="0 0 56 56"><rect x="3" y="3" width="50" height="50" rx="4" fill="#265983"/><path d="M3 28h50v21q0 4-4 4H7q-4 0-4-4z" fill="#1f4867"/><path d="M10 11c5-4 11 2 15 7 6 7 9 12 9 19 3 3 6 4 8 6l6 3-6-.5 6 4M10 11c3 7 4 12 7 15-2 5-1 8 2 11l2-6 6 7" fill="none" stroke="#e7f0f5" stroke-width="1.400"/><path d="M42 10l5 7" stroke="#fff" stroke-width="3.200"/><path d="M40 6.500c-2.500 2 0 6 3 4.500 2-1 1.500-3 .5-4M45 17.500c-1 2 1 3.500 3 2.500M50 17c-.5-2-2-2.500-4-2" fill="none" stroke="#fff" stroke-width="2"/></svg></div>
    <div class="w-[62px] flex justify-center pt-[11px] shrink-0"><svg class="w-14 h-14" viewBox="0 0 56 56"><use href="#tile"/><path d="M28 10c-10 10-11 24 0 33z" fill="#a5e757"/><path d="M28 10c10 10 11 24 0 33z" fill="#43d96a"/><path d="M28.500 40v8" stroke="#43c956" stroke-width="1.500"/></svg></div>
    <div class="w-[62px] flex justify-center pt-[11px] shrink-0"><svg class="w-14 h-14" viewBox="0 0 56 56"><circle cx="28" cy="28" r="26" fill="#1d91ed"/><path d="M11 28h31c2 0 2-2 0-5 0-3 2-4 3-3l2 4c2-1 3 0 3 1-1 3-4 4-6 4-2 8-8 13-17 13-11 0-16-6-16-14z" fill="#fff"/><path d="M14 23h4.500v4H14zM19 23h4.500v4H19zM24 23h4.500v4H24zM29 23h4.500v4H29zM34 23h4.500v4H34zM19 18.500h4.500v4H19zM24 18.500h4.500v4H24zM29 18.500h4.500v4H29zM29 14h4.500v4H29z" fill="#fff"/></svg></div>
    <div class="w-[62px] border-b-[5px] border-white flex justify-center pt-[11px] shrink-0"><svg class="w-14 h-14 shrink-0" viewBox="0 0 56 56"><rect x="6" y="6" width="44" height="44" rx="9" fill="#303030" stroke="#adadad" stroke-width="2.400"/><path d="M14 14l5 4-5 4M22 23h7" fill="none" stroke="#fff" stroke-width="2"/></svg></div>
    <div class="w-[62px] border-b-[5px] border-white flex justify-center pt-[11px] shrink-0"><svg class="w-14 h-14 shrink-0" viewBox="0 0 56 56"><use href="#tile"/><path d="M9 15h38M9 21h38M9 28h38M9 34h38M9 41h38" stroke="#d0d0d0"/><path d="M15 5v46" stroke="#e4e4e4"/><path d="M44 5L25 50" stroke="#6f767c" stroke-width="3.500"/><path d="M43.500 6L26 47" stroke="#d9e5ee" stroke-width="1.500"/></svg></div>
    <div class="w-[62px] flex justify-center pt-[11px] shrink-0"><svg class="w-14 h-14" viewBox="0 0 56 56"><defs><linearGradient id="ms" x1="0" y1="1" x2="1" y2="0"><stop offset="0" stop-color="#0a7cff"/><stop offset=".5" stop-color="#a033ff"/><stop offset="1" stop-color="#ff5c6c"/></linearGradient></defs><rect x="2" y="2" width="52" height="52" rx="10" fill="#fff"/><path d="M28 8C16 8 8 16.500 8 27.500c0 6 2.500 10.500 6.500 14V49l7-3.500c2 .6 4 1 6.500 1 12 0 20-8.500 20-19S40 8 28 8z" fill="url(#ms)"/><path d="M16 34l8-11 7 5 9-6-8 11-7-5z" fill="#fff" stroke="#fff"/></svg></div>
    <div class="w-[62px] flex justify-center pt-[11px] shrink-0"><svg class="w-14 h-14 font-['Lato','Open_Sans',sans-serif]" viewBox="0 0 56 56"><rect x="7" y="7" width="42" height="42" rx="9" fill="#0068ff"/><path d="M15 7h25q9 0 9 9v24c-6 6-18 6-26 3-4 2-7 1-9 1 2-2 2-4 1-6-5-9-5-22 0-31z" fill="#fff"/><text x="15.500" y="32" font-size="15.500" font-weight="bold" fill="#0068ff">Zalo</text></svg></div>
    <div class="w-[62px] flex justify-center pt-[11px] shrink-0"><svg class="w-14 h-14" viewBox="0 0 56 56"><rect x="5" y="5" width="46" height="46" rx="10" fill="#21b4f8"/><path d="M13 28l26-11-4 22-9-6-3 4-2-7 13-9-16 9z" fill="#fff"/></svg></div>
    <div class="w-[62px] flex justify-center pt-[11px] shrink-0"><svg class="w-14 h-14" viewBox="0 0 56 56"><circle cx="28" cy="28" r="26" fill="#5865f2"/><path d="M18 18l6-2 1.500 2.500h5L32 16l6 2c5 7 7 13 6 20-3 2-5 3-8 3.500L34 38H22l-2 3.500c-3-.5-5-1.500-8-3.500-1-7 1-13 6-20z" fill="#fff"/><ellipse cx="22.500" cy="29.500" rx="3" ry="3.500" fill="#5865f2"/><ellipse cx="33.500" cy="29.500" rx="3" ry="3.500" fill="#5865f2"/></svg></div>
    <div class="w-[62px] border-b-[5px] border-[#5490ff] flex justify-center pt-[11px] shrink-0"><svg class="w-14 h-14 shrink-0" viewBox="0 0 56 56"><path d="M2 23L28 4l26 19v28q0 2-2 2H4q-2 0-2-2z" fill="#1d5dc9"/><path d="M2 23l24 15L2 52zM54 23L30 38l24 14z" fill="#1f6bef"/><path d="M3 53l25-16 25 16z" fill="#2b66d8"/><path d="M15 17h26v13c0 5-3 8-7 8h-2l-4-3-4 3h-2c-4 0-7-3-7-8z" fill="#fff"/><path d="M25 19v10M25 28a3.800 3.800 0 1 1 3.800 3.800A3.800 3.800 0 0 1 25 28z" fill="none" stroke="#1559c4" stroke-width="3.200"/></svg></div>
    <div class="w-[62px] flex justify-center pt-[11px] shrink-0"><svg class="w-14 h-14" viewBox="0 0 56 56"><rect x="5" y="5" width="46" height="46" rx="10" fill="#7a7cf8"/><path d="M28 16l4 8 9 1-6.500 6.500L36 41l-8-4.500L20 41l1.500-9.500L15 25l9-1z" fill="#fff" stroke="#fff" stroke-width="1.500" stroke-linejoin="round"/></svg></div>
    <div class="w-[62px] flex justify-center pt-[11px] shrink-0"><svg class="w-14 h-14" viewBox="0 0 56 56"><use href="#tile"/><path d="M15 33l5-1 8 4 8-4 5 1-13 7.500z" fill="#ff6c37"/><path d="M15 26l5-1 8 4 8-4 5 1-13 7.500z" fill="#9fcc3b"/><path d="M28 15.500l13 6.500-13 6.500L15 22z" fill="#4aa9dc"/></svg></div>
    <div class="w-[62px] border-b-[5px] border-[#56baf9] flex justify-center pt-[11px] shrink-0"><svg class="w-14 h-14 shrink-0" viewBox="0 0 56 56"><use href="#tile"/><path d="M27 5c-2 10-1 16 2 24M51 24c-1 4-3 7-6 8" fill="none" stroke="#2d9bdd" stroke-width="5"/><g fill="#93cfe9" stroke="#26333b" stroke-width="1.200"><path d="M11 33l13-2c1 5-1 8-5 9-5 1-8-2-8-7zM31 29l14-2c1 5 0 8-5 9-5 0-8-2-9-7z"/><path d="M24 32l7-2M11 34l4 11M45 27l4 10-4 4" fill="none"/></g></svg></div>
    <div class="w-[62px] flex justify-center pt-[19px] pr-[7px] shrink-0 text-black"><svg class="w-10 h-10"><use href="#dots"/></svg></div>
  </div>
</footer>
</body>
</html>
